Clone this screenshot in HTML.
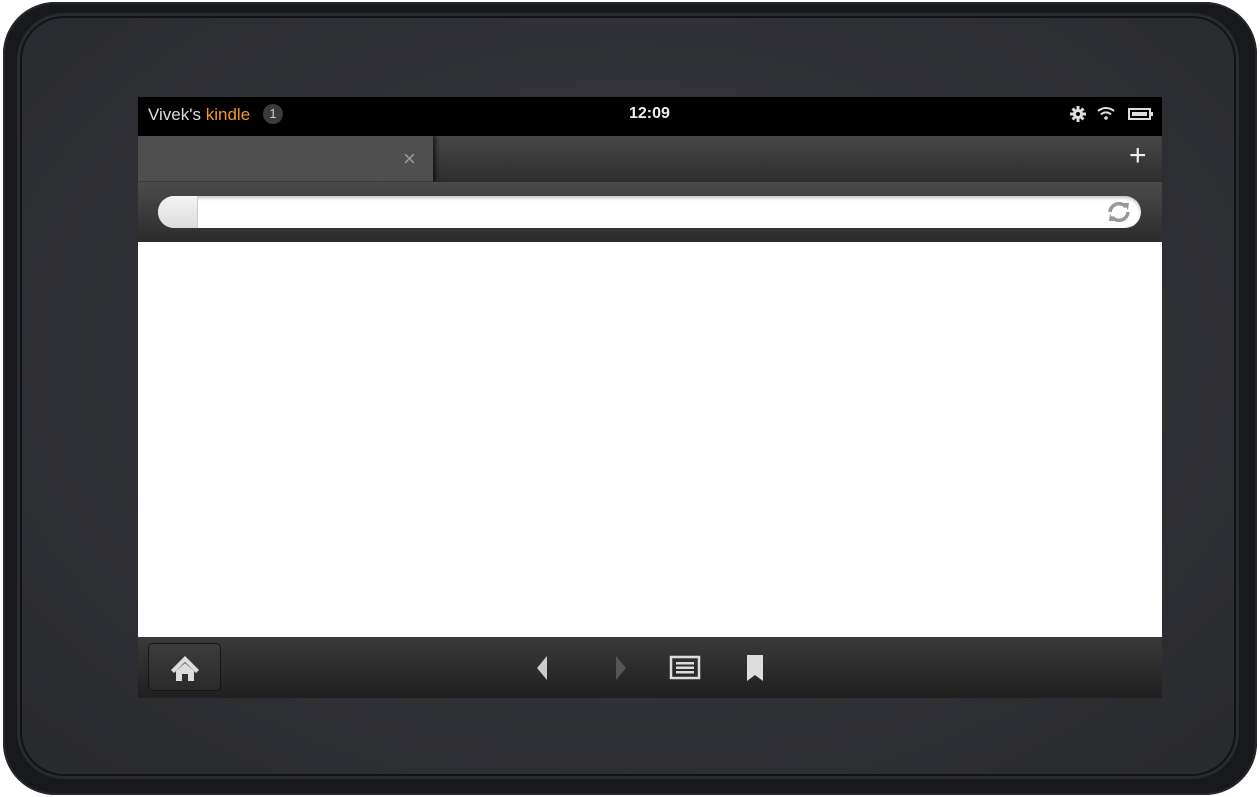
<!DOCTYPE html>
<html><head><style>
*{margin:0;padding:0;box-sizing:border-box}
body{width:1260px;height:797px;background:#fff;position:relative;overflow:hidden;font-family:"Liberation Sans",sans-serif}
.dev{position:absolute;left:3px;top:2px;width:1254px;height:793px;border-radius:52px;background:#18191c;box-shadow:inset 0 0 0 2px #26272b}
.bez{position:absolute;left:22px;top:18px;width:1212px;height:756px;border-radius:42px;background:radial-gradient(ellipse at 50% 45%,#3a3b40 0%,#303136 55%,#28292d 100%);box-shadow:0 0 0 2px #121316,0 0 0 5px #2a2b2f}
.scr{position:absolute;left:138px;top:97px;width:1024px;height:601px;background:#fff;overflow:hidden}
.sb{position:absolute;left:0;top:0;width:1024px;height:39px;background:#000;color:#ddd;font-size:17px}
.tabs{position:absolute;left:0;top:39px;width:1024px;height:46px;background:linear-gradient(#474747,#2e2e2e)}
.tab{position:absolute;left:0;top:0;width:295px;height:46px;background:#4f4f4f;border-bottom:1px solid #3a3a3a;box-shadow:3px 0 4px rgba(0,0,0,.6)}
.url{position:absolute;left:0;top:85px;width:1024px;height:60px;background:linear-gradient(#4b4b4b,#2c2c2c)}
.inp{position:absolute;left:20px;top:14px;width:983px;height:32px;border-radius:16px;background:#fff;box-shadow:inset 0 2px 3px rgba(0,0,0,.25)}
.bot{position:absolute;left:0;top:540px;width:1024px;height:61px;background:linear-gradient(#3a3a3a,#1f1f1f)}
.home{position:absolute;left:10px;top:6px;width:73px;height:48px;border-radius:5px;background:linear-gradient(#3d3d3d,#2a2a2a);border:1px solid #151515}
</style></head><body>
<div class="dev"></div>
<div class="bez"></div>
<div style="position:absolute;left:1193px;top:44px;width:16px;height:16px;border-radius:50%;background:#2a2b2f"></div>
<div class="scr">
 <div class="sb">
  <span style="position:absolute;left:10px;top:8px">Vivek's <span style="color:#f39a1e">kindle</span></span>
  <span style="position:absolute;left:125px;top:7px;width:20px;height:20px;border-radius:50%;background:#3a3a3a;font-size:13px;text-align:center;line-height:20px;color:#ccc">1</span>
  <span style="position:absolute;left:491px;top:8px;font-weight:bold;color:#eee;font-size:16px">12:09</span>
  <svg style="position:absolute;left:930px;top:8px" width="100" height="20">
   <g fill="#ddd"><circle cx="10" cy="9" r="5"/><g stroke="#ddd" stroke-width="3"><line x1="10" y1="1" x2="10" y2="17"/><line x1="2" y1="9" x2="18" y2="9"/><line x1="4.5" y1="3.5" x2="15.5" y2="14.5"/><line x1="15.5" y1="3.5" x2="4.5" y2="14.5"/></g><circle cx="10" cy="9" r="2" fill="#000"/></g>
   <g fill="none" stroke="#ddd" stroke-width="2"><path d="M30 6a12 12 0 0 1 16 0"/><path d="M33 9.5a7 7 0 0 1 10 0"/></g><circle cx="38" cy="13" r="1.8" fill="#ddd"/>
   <rect x="61" y="4" width="21" height="10" fill="none" stroke="#ddd" stroke-width="2"/><rect x="64" y="7" width="15" height="4" fill="#ddd"/><rect x="83" y="7" width="2" height="4" fill="#ddd"/>
  </svg>
 </div>
 <div class="tabs">
  <div class="tab"><span style="position:absolute;left:265px;top:10px;color:#999;font-size:22px">×</span></div>
  <span style="position:absolute;left:991px;top:3px;color:#eee;font-size:30px">+</span>
 </div>
 <div class="url"><div class="inp">
  <div style="position:absolute;left:0;top:0;width:40px;height:32px;border-radius:16px 0 0 16px;background:linear-gradient(#f4f4f4,#dcdcdc);border-right:1px solid #ccc"></div>
  <svg style="position:absolute;left:948px;top:4px" width="26" height="24" viewBox="0 0 26 24"><g fill="none" stroke="#999" stroke-width="3.5"><path d="M4 12a9 9 0 0 1 16-5"/><path d="M22 12a9 9 0 0 1-16 5"/></g><path d="M17 3l6 0-1 7z" fill="#999"/><path d="M9 21l-6 0 1-7z" fill="#999"/></svg>
 </div></div>
 <div class="bot">
  <div class="home"><svg style="position:absolute;left:21px;top:11px" width="30" height="26" viewBox="0 0 30 26"><path d="M15 1L1 15l3 3L15 7l11 11 3-3z" fill="#ddd"/><path d="M6 16L15 8l9 8v10h-6v-7h-6v7H6z" fill="#ddd"/></svg></div>
  <svg style="position:absolute;left:395px;top:15px" width="240" height="32">
   <path d="M4 16L14 4v24z" fill="#ccc"/>
   <path d="M83 4l10 12-10 12z" fill="#555"/>
   <rect x="138" y="5" width="28" height="21" fill="none" stroke="#ddd" stroke-width="2.5"/><g fill="#ddd"><rect x="143" y="10" width="18" height="2.5"/><rect x="143" y="14.5" width="18" height="2.5"/><rect x="143" y="19" width="18" height="2.5"/></g>
   <path d="M214 3h16v26l-8-6-8 6z" fill="#ddd"/>
  </svg>
 </div>
</div>
</body></html>
